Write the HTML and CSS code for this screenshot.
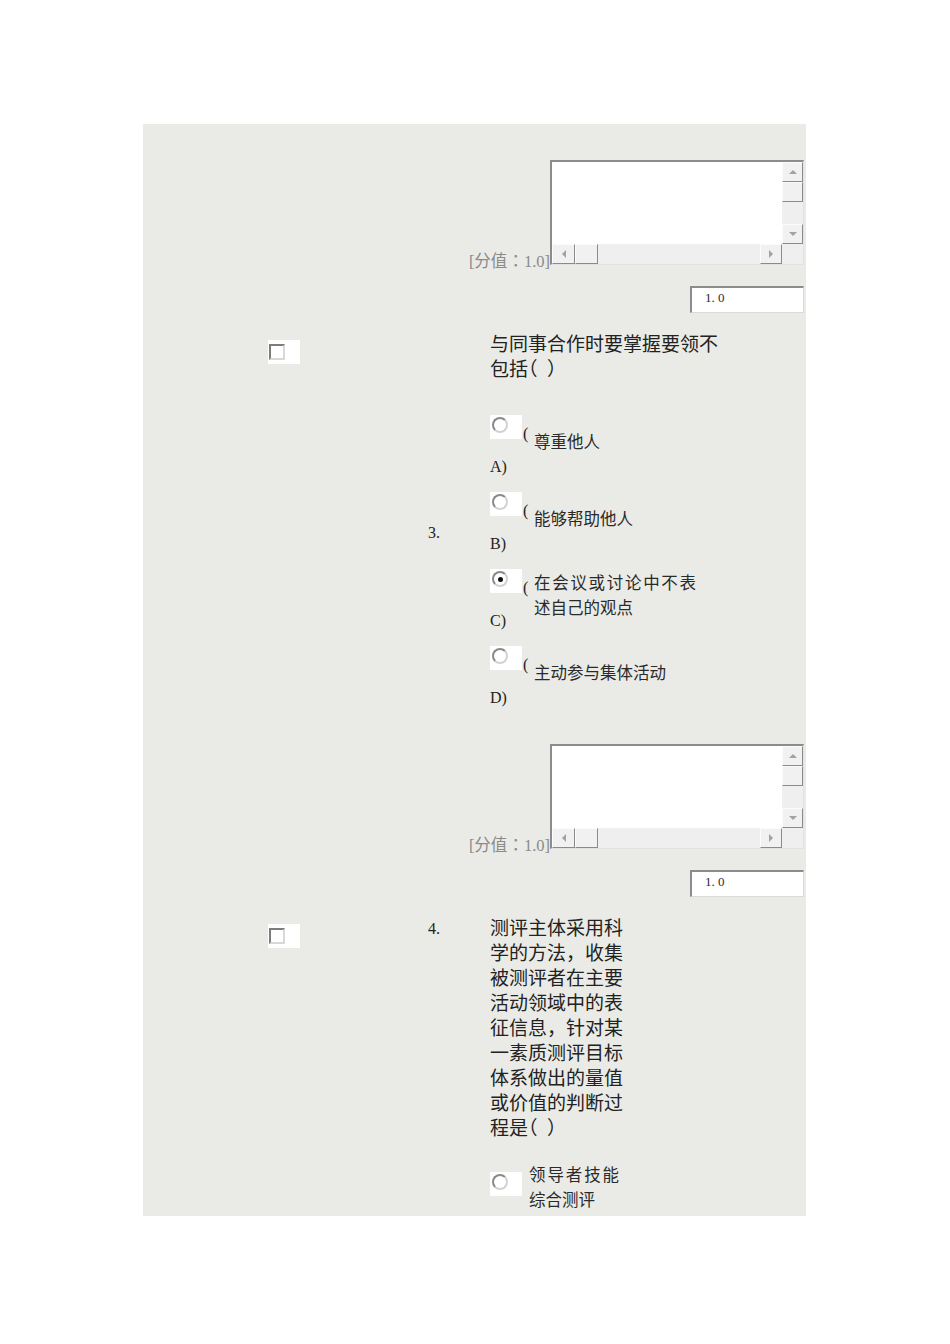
FILE: index.html
```html
<!DOCTYPE html>
<html lang="zh-CN">
<head>
<meta charset="utf-8">
<title>测评</title>
<link rel="stylesheet" href="styles.css">
</head>
<body>
<div class="page">
  <div class="panel">
    <div class="score first">
      <span class="score-label">[分值<span class="tc" lang="zh-TW">：</span>1.0]</span>
      <div class="ta">
        <div class="ta-main">
          <div class="ta-text"></div>
          <div class="vbar">
            <div class="sbtn"><i class="tri tri-up"></i></div>
            <div class="sthumb"></div>
            <div class="strack"></div>
            <div class="sbtn"><i class="tri tri-down"></i></div>
          </div>
        </div>
        <div class="hrow">
          <div class="hbar">
            <div class="sbtn bl"><i class="tri tri-left"></i></div>
            <div class="sthumb"></div>
            <div class="strack"></div>
            <div class="sbtn br"><i class="tri tri-right"></i></div>
          </div>
          <div class="corner"></div>
        </div>
      </div>
    </div>
    <div class="val-row"><div class="val">1. 0</div></div>

    <div class="q q3">
      <div class="q-check"><span class="cbox"><span class="cb"></span></span></div>
      <div class="q-num mid">3.</div>
      <div class="q-body">
        <div class="q-text">与同事合作时要掌握要领不包括<span class="lp">（</span>）</div>
        <div class="opts">
          <div class="opt">
            <div class="opt-key">
              <div class="opt-top"><span class="rbox"><span class="radio"></span></span><span class="paren">(</span></div>
              <div class="letter">A)</div>
            </div>
            <div class="opt-text">尊重他人</div>
          </div>
          <div class="opt">
            <div class="opt-key">
              <div class="opt-top"><span class="rbox"><span class="radio"></span></span><span class="paren">(</span></div>
              <div class="letter">B)</div>
            </div>
            <div class="opt-text">能够帮助他人</div>
          </div>
          <div class="opt">
            <div class="opt-key">
              <div class="opt-top"><span class="rbox"><span class="radio on"></span></span><span class="paren">(</span></div>
              <div class="letter">C)</div>
            </div>
            <div class="opt-text">在会议或讨论中不表述自己的观点</div>
          </div>
          <div class="opt">
            <div class="opt-key">
              <div class="opt-top"><span class="rbox"><span class="radio"></span></span><span class="paren">(</span></div>
              <div class="letter">D)</div>
            </div>
            <div class="opt-text">主动参与集体活动</div>
          </div>
        </div>
      </div>
    </div>

    <div class="score second">
      <span class="score-label">[分值<span class="tc" lang="zh-TW">：</span>1.0]</span>
      <div class="ta">
        <div class="ta-main">
          <div class="ta-text"></div>
          <div class="vbar">
            <div class="sbtn"><i class="tri tri-up"></i></div>
            <div class="sthumb"></div>
            <div class="strack"></div>
            <div class="sbtn"><i class="tri tri-down"></i></div>
          </div>
        </div>
        <div class="hrow">
          <div class="hbar">
            <div class="sbtn bl"><i class="tri tri-left"></i></div>
            <div class="sthumb"></div>
            <div class="strack"></div>
            <div class="sbtn br"><i class="tri tri-right"></i></div>
          </div>
          <div class="corner"></div>
        </div>
      </div>
    </div>
    <div class="val-row"><div class="val">1. 0</div></div>

    <div class="q q4">
      <div class="q-check"><span class="cbox"><span class="cb"></span></span></div>
      <div class="q-num">4.</div>
      <div class="q-body">
        <div class="q-text">测评主体采用科学的方法，收集被测评者在主要活动领域中的表征信息，针对某一素质测评目标体系做出的量值或价值的判断过程是<span class="lp">（</span>）</div>
        <div class="opt4">
          <span class="rbox"><span class="radio"></span></span>
          <div class="opt-text">领导者技能综合测评</div>
        </div>
      </div>
    </div>
  </div>
</div>
</body>
</html>
```

FILE: styles.css
```css
* { box-sizing: border-box; }
html, body { margin: 0; padding: 0; background: #ffffff; }
body {
  font-family: "Liberation Serif", "Noto Sans CJK SC", serif;
  color: #222222;
  text-spacing-trim: space-all;
}
.tc { font-family: "Noto Sans CJK TC", sans-serif; }
.lp { font-feature-settings: "halt" 1; margin-right: 0.5em; }
.page { padding: 124px 0 0 143px; }
.panel {
  width: 663px;
  height: 1092px;
  overflow: hidden;
  background: #eaebe6;
}

/* score + textarea */
.score {
  display: flex;
  justify-content: flex-end;
  align-items: flex-end;
  padding-right: 2px;
}
.score.first { margin-top: 36px; }
.score.second { margin-top: 10px; }
.score-label {
  font-size: 16.5px;
  line-height: 20px;
  color: #8a8a8a;
  white-space: nowrap;
  margin-bottom: -7px;
}
.ta {
  width: 254px;
  height: 105px;
  background: #ffffff;
  border-style: solid;
  border-width: 2px 1px 1px 2px;
  border-color: #8c8c8c #e2e2e2 #e2e2e2 #8c8c8c;
  display: flex;
  flex-direction: column;
}
.ta-main { flex: 1; display: flex; }
.ta-text { flex: 1; }
.vbar {
  width: 21px;
  display: flex;
  flex-direction: column;
  background: #efefef;
}
.hrow { height: 20px; display: flex; }
.hbar { flex: 1; display: flex; background: #efefef; }
.corner { width: 21px; background: #efefef; }
.sbtn, .sthumb {
  background: #f1f1f1;
  border: 1px solid;
  border-color: #fcfcfc #8a8a8a #8a8a8a #fcfcfc;
  display: flex;
  align-items: center;
  justify-content: center;
  flex: none;
}
.vbar .sbtn, .vbar .sthumb { height: 20px; }
.strack { flex: 1; }
.hbar .sbtn, .hbar .sthumb { width: 23px; }
.hbar .sbtn.br { width: 22px; }
.tri { display: block; width: 0; height: 0; border: 4px solid transparent; }
.tri-up { border-top-width: 0; border-bottom-color: #a2a2a2; }
.tri-down { border-bottom-width: 0; border-top-color: #a2a2a2; }
.tri-left { border-left-width: 0; border-right-color: #a2a2a2; }
.tri-right { border-right-width: 0; border-left-color: #a2a2a2; }

/* value box */
.val-row {
  display: flex;
  justify-content: flex-end;
  padding-right: 2px;
  margin-top: 21px;
}
.val {
  width: 114px;
  height: 27px;
  background: #ffffff;
  border-style: solid;
  border-width: 2px 1px 1px 2px;
  border-color: #8c8c8c #dadada #dadada #8c8c8c;
  font-size: 13px;
  line-height: 20px;
  padding-left: 13px;
  color: #2a2a2a;
  white-space: pre;
}

/* question rows */
.q { display: flex; margin-top: 19px; }
.q-check { width: 160px; margin-left: 125px; padding-top: 8px; flex: none; }
.cbox {
  display: block;
  width: 32px;
  height: 24px;
  background: #ffffff;
  padding: 4px 0 0 1px;
}
.cb {
  display: block;
  width: 16px;
  height: 16px;
  border: 2px solid;
  border-color: #7c7c7c #d8d8d8 #d8d8d8 #7c7c7c;
  background: #ffffff;
}
.q-num { width: 62px; flex: none; font-size: 16px; line-height: 25px; }
.q-num.mid { align-self: center; line-height: 20px; }
.q3 .q-body { padding-bottom: 24px; }
.q-text { font-size: 19px; line-height: 25px; color: #222222; }
.q3 .q-text { width: 232px; }
.q4 .q-text { width: 140px; }

.opts { display: flex; flex-direction: column; gap: 13px; margin-top: 33px; }
.opt { display: flex; }
.opt-key { width: 44px; flex: none; }
.opt-top { display: flex; align-items: flex-end; }
.rbox {
  display: block;
  width: 32px;
  height: 24px;
  background: #ffffff;
  padding: 2px 0 0 2px;
  flex: none;
}
.radio {
  display: flex;
  align-items: center;
  justify-content: center;
  width: 16px;
  height: 16px;
  border-radius: 50%;
  border: 2px solid;
  border-color: #8a8a8a #d2d2d2 #d2d2d2 #8a8a8a;
  background: #ffffff;
}
.radio.on::after {
  content: "";
  width: 5px;
  height: 5px;
  border-radius: 50%;
  background: #111111;
}
.paren { font-size: 16px; line-height: 16px; margin: 0 0 -3px 1px; }
.letter { font-size: 16px; line-height: 25px; margin-top: 15px; }
.opt-text {
  font-size: 16.5px;
  line-height: 25px;
  color: #2a2a2a;
  text-align: justify;
}
.opt .opt-text { align-self: center; margin-bottom: 10px; width: 162px; }

.opt4 { display: flex; align-items: flex-start; margin-top: 22px; }
.opt4 .rbox { margin-top: 9px; }
.opt4 .opt-text { width: 90px; margin-left: 7px; }
```
